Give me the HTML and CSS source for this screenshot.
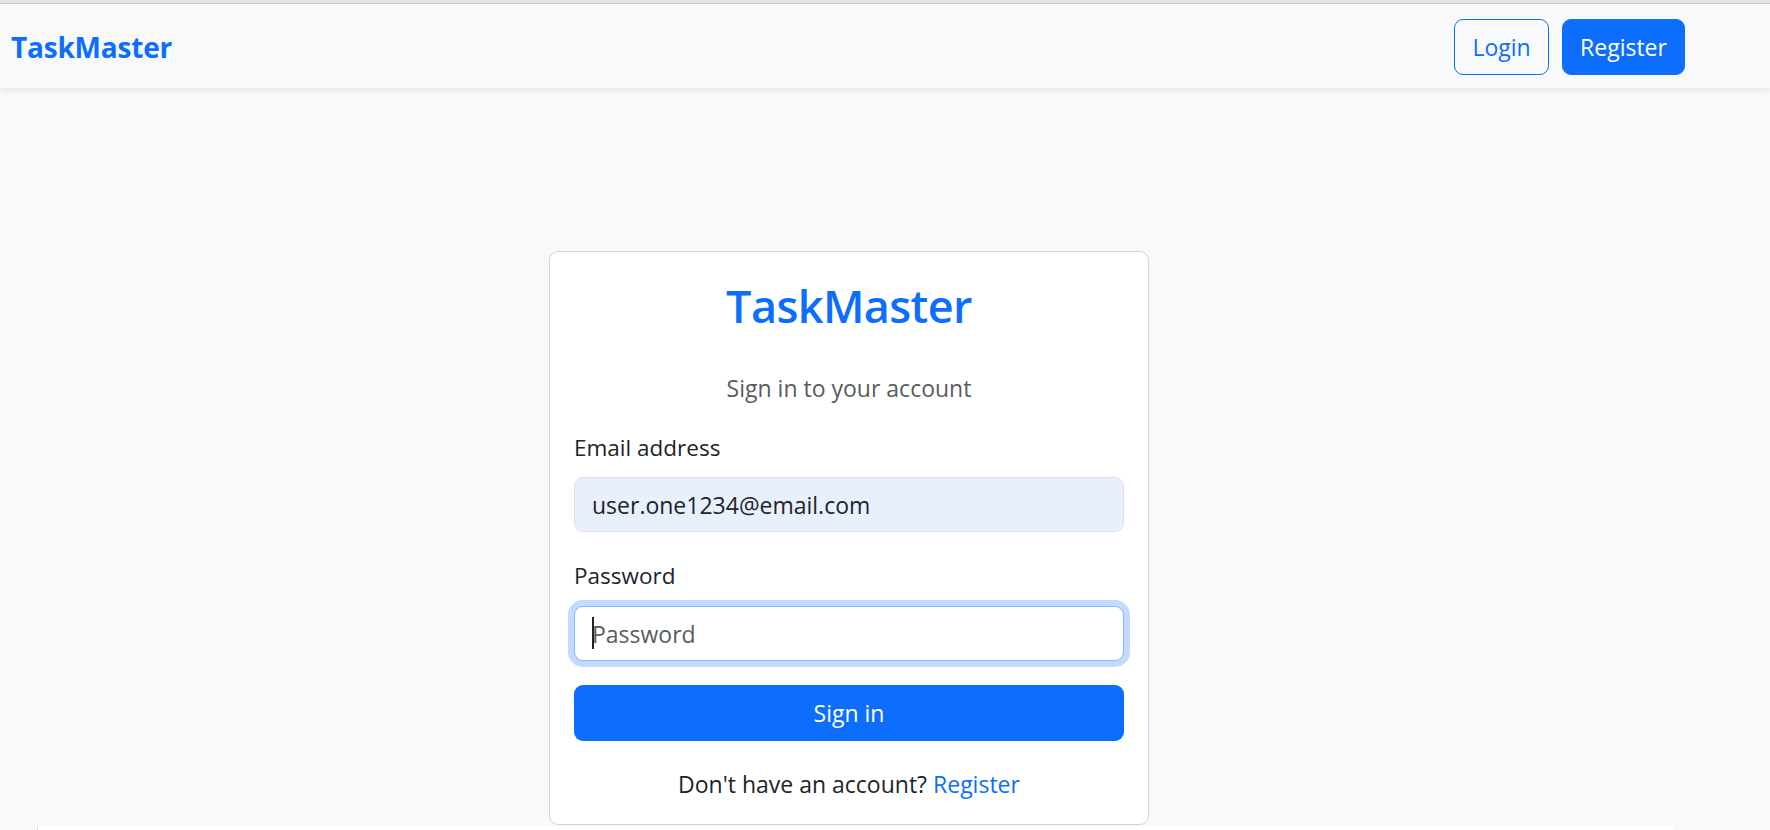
FILE: index.html
```html
<!DOCTYPE html>
<html lang="en">
<head>
<meta charset="utf-8">
<title>TaskMaster - Sign in</title>
<link rel="stylesheet" href="styles.css">
</head>
<body>
<div class="chrome"></div>
<nav class="navbar">
  <a class="brand" href="#">TaskMaster</a>
  <div class="nav-actions">
    <a class="btn btn-outline" href="#">Login</a>
    <a class="btn btn-primary" href="#">Register</a>
  </div>
</nav>
<main class="main">
  <div class="card">
    <h1 class="card-title">TaskMaster</h1>
    <p class="subtitle">Sign in to your account</p>
    <form class="form">
      <label class="label" for="email">Email address</label>
      <input class="input input-autofill" id="email" type="email" value="user.one1234@email.com">
      <label class="label label-password" for="password">Password</label>
      <div class="input-wrap">
        <input class="input input-focus" id="password" type="password" placeholder="Password">
        <span class="caret"></span>
      </div>
      <button class="submit" type="button">Sign in</button>
    </form>
    <p class="footnote">Don't have an account? <a class="link" href="#">Register</a></p>
  </div>
</main>
<footer class="footer"></footer>
</body>
</html>
```

FILE: styles.css
```css
* { box-sizing: border-box; }

html, body {
  margin: 0;
  padding: 0;
}

body {
  background: #f8f9fa;
  font-family: "Open Sans", "Noto Sans", sans-serif;
  color: #212529;
  overflow: hidden;
}

.chrome {
  height: 4px;
  background: #e3e3e3;
  border-bottom: 1px solid #cdcdcd;
}

.navbar {
  height: 84px;
  display: flex;
  align-items: center;
  justify-content: space-between;
  padding: 2px 85px 0 11px;
  background: #f8f9fa;
  box-shadow: 0 3px 6px rgba(0, 0, 0, 0.075);
  position: relative;
  z-index: 1;
}

.brand {
  font-weight: 700;
  font-size: 28px;
  color: #0d6efd;
  text-decoration: none;
  letter-spacing: -0.2px;
}

.nav-actions {
  display: flex;
  gap: 13px;
}

.btn {
  display: flex;
  align-items: center;
  justify-content: center;
  height: 56px;
  padding: 0 12px;
  border-radius: 9px;
  font-size: 23px;
  text-decoration: none;
  border: 1px solid #0d6efd;
}

.btn-outline {
  width: 95px;
  color: #0d6efd;
  background: transparent;
}

.btn-primary {
  width: 123px;
  color: #fff;
  background: #0d6efd;
}

.main {
  padding: 163px 0 1px 549px;
}

.card {
  width: 600px;
  background: #fff;
  border: 1px solid #d3d4d5;
  border-radius: 9px;
  padding: 25px 24px 22px;
}

.card-title {
  margin: 0;
  font-size: 45px;
  line-height: 58px;
  font-weight: 600;
  color: #0d6efd;
  text-align: center;
  letter-spacing: -0.6px;
}

.subtitle {
  margin: 35px 0 0;
  font-size: 23px;
  line-height: 36px;
  color: #595c5f;
  text-align: center;
}

.form {
  display: flex;
  flex-direction: column;
  margin-top: 24px;
}

.label {
  font-size: 22.5px;
  line-height: 36px;
  margin-bottom: 11px;
  color: #212529;
}

.label-password {
  margin-top: 26px;
  margin-bottom: 12px;
}

.input {
  width: 100%;
  height: 55px;
  border: 1px solid #dee2e6;
  border-radius: 9px;
  padding: 0 17px;
  font-family: inherit;
  font-size: 23px;
  color: #212529;
  background: #fff;
  outline: none;
}

.input-autofill {
  background: #e8f0fe;
}

.input-focus {
  border-color: #86b7fe;
  box-shadow: 0 0 0 6px rgba(13, 110, 253, 0.25);
}

.input::placeholder {
  color: #595c5f;
  opacity: 1;
}

.input-wrap {
  position: relative;
}

.caret {
  position: absolute;
  left: 18px;
  top: 11px;
  width: 1.5px;
  height: 32px;
  background: #212529;
}

.submit {
  margin-top: 24px;
  height: 56px;
  border: none;
  border-radius: 9px;
  background: #0d6efd;
  color: #fff;
  font-family: inherit;
  font-size: 23px;
}

.footnote {
  margin: 25px 0 0;
  font-size: 23px;
  line-height: 36px;
  text-align: center;
  color: #212529;
}

.link {
  color: #0d6efd;
  text-decoration: none;
}

.footer {
  margin-left: 37px;
  width: 1637px;
  height: 80px;
  background: #fff;
  border-left: 1px solid #dcdcdc;
}
```
